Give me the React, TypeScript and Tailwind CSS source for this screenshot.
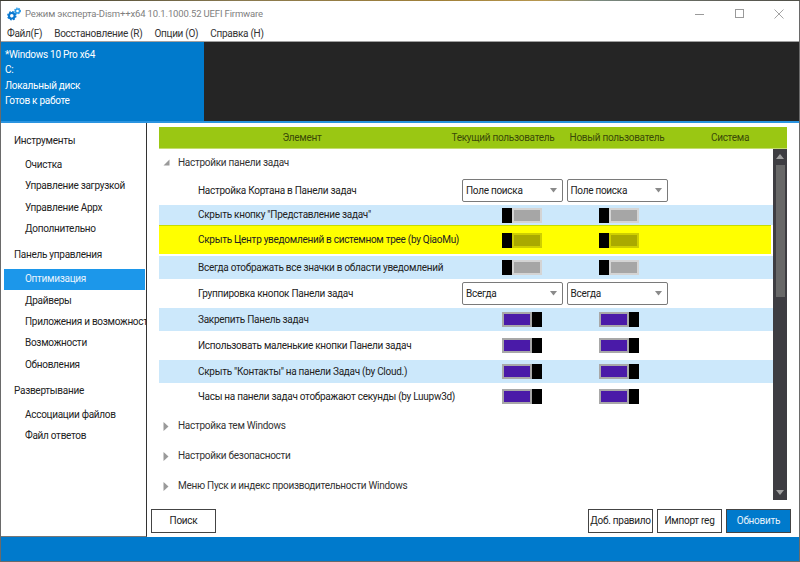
import React from "react";

const FONT = "[font-family:Roboto,sans-serif]";

function Gears() {
  return (
    <svg width="14" height="14" viewBox="0 0 16 16" className="shrink-0">
      <circle cx="5.5" cy="10" r="3.2" fill="none" stroke="#0a78d0" strokeWidth="2.4" />
      <circle cx="5.5" cy="10" r="4.6" fill="none" stroke="#0a78d0" strokeWidth="1.6" strokeDasharray="2 1.6" />
      <circle cx="12" cy="4.5" r="2.3" fill="none" stroke="#2a9be8" strokeWidth="1.6" />
      <circle cx="12" cy="4.5" r="3.4" fill="none" stroke="#2a9be8" strokeWidth="1.2" strokeDasharray="1.6 1.2" />
    </svg>
  );
}

function WindowButtons() {
  return (
    <div className="flex items-center gap-[29px] pr-[15px]">
      <svg width="10" height="10" viewBox="0 0 10 10" className="mr-[1px]">
        <path d="M0 5.5H9" stroke="#9a9a9a" strokeWidth="1" />
      </svg>
      <svg width="10" height="10" viewBox="0 0 10 10">
        <rect x="0.5" y="0.5" width="8" height="8" fill="none" stroke="#9a9a9a" />
      </svg>
      <svg width="10" height="10" viewBox="0 0 10 10">
        <path d="M0.5 0.5L9.5 9.5M9.5 0.5L0.5 9.5" stroke="#9a9a9a" strokeWidth="0.9" />
      </svg>
    </div>
  );
}

function Caret() {
  return (
    <svg width="7" height="5" viewBox="0 0 7 5" className="shrink-0">
      <path d="M0 0H7L3.5 4.5Z" fill="#8a8a8a" />
    </svg>
  );
}

function Select({ value }: { value: string }) {
  return (
    <div className="flex h-[23px] w-[101px] items-center justify-between rounded-[2px] border border-[#7a7a7a] bg-white pl-[3px] pr-[5px] text-[#222]">
      <span>{value}</span>
      <Caret />
    </div>
  );
}

function Toggle({ on, yellow }: { on?: boolean; yellow?: boolean }) {
  if (on) {
    return (
      <div className="flex h-[15px] w-[40px] items-stretch">
        <div className="flex-1 border-2 border-[#a8a8a8] bg-[#4a1aa8]" />
        <div className="w-[10px] bg-black" />
      </div>
    );
  }
  return (
    <div className="flex h-[15px] w-[40px] items-stretch">
      <div className="w-[10px] bg-black" />
      <div className={`flex-1 border-2 ${yellow ? "border-[#cfcf00] bg-[#aaaa00]" : "border-[#d4d4d4] bg-[#a6a6a6]"}`} />
    </div>
  );
}

type RowProps = {
  label: string;
  h: string;
  tone?: "blue" | "yellow" | "white";
  select?: string;
  on?: boolean;
};

function Row({ label, h, tone = "white", select, on }: RowProps) {
  const bg =
    tone === "blue"
      ? "bg-[#cce8fb] w-[614px]"
      : tone === "yellow"
      ? "bg-[#ffff00] border-t border-[#c8dc00] -ml-[2px] w-[614px] pl-[2px]"
      : "";
  return (
    <div className={`flex items-center ${h} ${bg}`}>
      <div className="w-[303px] shrink-0 whitespace-nowrap pl-[39px] text-[#222]">{label}</div>
      {select ? (
        <>
          <div className="w-[104.5px] shrink-0">
            <Select value={select} />
          </div>
          <Select value={select} />
        </>
      ) : (
        <>
          <div className="w-[137px] shrink-0 pl-[40px]">
            <Toggle on={on} yellow={tone === "yellow"} />
          </div>
          <Toggle on={on} yellow={tone === "yellow"} />
        </>
      )}
    </div>
  );
}

function Group({ label, open, h }: { label: string; open?: boolean; h: string }) {
  return (
    <div className={`flex items-center ${h} text-[#333]`}>
      <div className="flex w-[19px] justify-center pr-[5px]">
        {open ? (
          <svg width="7" height="7" viewBox="0 0 7 7">
            <path d="M6.5 0.5V6.5H0.5Z" fill="#9a9a9a" />
          </svg>
        ) : (
          <svg width="6" height="9" viewBox="0 0 6 9">
            <path d="M0.5 0L5.5 4.5L0.5 9Z" fill="#9a9a9a" />
          </svg>
        )}
      </div>
      <span>{label}</span>
    </div>
  );
}

function SideGroup({ label }: { label: string }) {
  return <div className="flex h-[27px] items-center pl-[13px] text-[#222]">{label}</div>;
}

function SideItem({ label, active }: { label: string; active?: boolean }) {
  return (
    <div
      className={`flex h-[21.3px] items-center overflow-hidden whitespace-nowrap ${
        active ? "ml-[3px] w-[141px] bg-[#1c97ea] pl-[21px] text-[#e8f4fd]" : "pl-[24px] text-[#222]"
      }`}
    >
      {label}
    </div>
  );
}

function Btn({ label, primary }: { label: string; primary?: boolean }) {
  return (
    <div
      className={`flex h-[24px] w-[65px] items-center justify-center border border-[#444] whitespace-nowrap ${
        primary ? "bg-[#007acc] text-[#e6f2fb]" : "bg-white text-[#222]"
      }`}
    >
      {label}
    </div>
  );
}

export default function App() {
  return (
    <div className={`flex h-[562px] w-[800px] flex-col overflow-hidden bg-white ${FONT} text-[10px] leading-none tracking-[-0.28px]`}>
      <div className="h-px shrink-0 bg-[linear-gradient(90deg,#3a3a30_0%,#8a7a50_30%,#a08038_55%,#b89850_68%,#7a8a80_75%,#606058_90%,#505048_100%)]" />
      <div className="flex min-h-0 flex-1 flex-col border-x border-b border-[#6a6a6a]">
        {/* Title bar */}
        <div className="flex h-[25px] shrink-0 items-center justify-between bg-white">
          <div className="flex items-center gap-[4px] pl-[6px] pt-[1px] text-[9.5px] tracking-[-0.15px] text-[#808080]">
            <Gears />
            <span>Режим эксперта-Dism++x64 10.1.1000.52 UEFI Firmware</span>
          </div>
          <WindowButtons />
        </div>
        {/* Menu */}
        <div className="flex h-[15px] shrink-0 items-center gap-[12px] bg-white pl-[6px] text-[#333]">
          <span>Файл(F)</span>
          <span>Восстановление (R)</span>
          <span>Опции (O)</span>
          <span>Справка (H)</span>
        </div>
        <div className="h-px shrink-0 bg-[#a0a0a0]" />
        {/* Header band */}
        <div className="flex h-[79px] shrink-0 bg-[#252525]">
          <div className="flex w-[203px] flex-col gap-[4.6px] bg-[#007acc] pl-[4px] pt-[6.5px] leading-[11px] text-white">
            <span>*Windows 10 Pro x64</span>
            <span>C:</span>
            <span>Локальный диск</span>
            <span>Готов к работе</span>
          </div>
        </div>
        <div className="h-[2px] shrink-0 bg-[#2a94e0]" />
        {/* Body */}
        <div className="flex min-h-0 flex-1">
          <div className="w-[146px] shrink-0 border-r border-b border-r-[#333] border-b-[#777] bg-white pt-[4.5px]">
            <SideGroup label="Инструменты" />
            <SideItem label="Очистка" />
            <SideItem label="Управление загрузкой" />
            <SideItem label="Управление Appx" />
            <SideItem label="Дополнительно" />
            <div className="h-[2px]" />
            <SideGroup label="Панель управления" />
            <SideItem label="Оптимизация" active />
            <SideItem label="Драйверы" />
            <SideItem label="Приложения и возможности" />
            <SideItem label="Возможности" />
            <SideItem label="Обновления" />
            <div className="h-[2px]" />
            <SideGroup label="Развертывание" />
            <SideItem label="Ассоциации файлов" />
            <SideItem label="Файл ответов" />
          </div>
          <div className="flex min-w-0 flex-1 flex-col bg-white pl-[12px] pt-[4px] pr-[12px]">
            {/* Table header */}
            <div className="flex h-[22px] w-[628px] shrink-0 items-center border-b border-[#c4dc70] bg-[#9ac713] text-[#3a4a08]">
              <div className="w-[286px] text-center">Элемент</div>
              <div className="w-[116px] whitespace-nowrap text-center">Текущий пользователь</div>
              <div className="w-[112px] whitespace-nowrap text-center">Новый пользователь</div>
              <div className="w-[114px] text-center">Система</div>
            </div>
            {/* Table */}
            <div className="flex h-[351px] w-[628px] shrink-0 overflow-hidden">
              <div className="w-[614px] shrink-0">
                <Group label="Настройки панели задач" open h="h-[27px]" />
                <Row label="Настройка Кортана в Панели задач" h="h-[29px]" select="Поле поиска" />
                <Row label='Скрыть кнопку "Представление задач"' h="h-[20px]" tone="blue" />
                <Row label="Скрыть Центр уведомлений в системном трее (by QiaoMu)" h="h-[29px]" tone="yellow" />
                <div className="h-[2px]" />
                <Row label="Всегда отображать все значки в области уведомлений" h="h-[23px]" tone="blue" />
                <Row label="Группировка кнопок Панели задач" h="h-[29px]" select="Всегда" />
                <Row label="Закрепить Панель задач" h="h-[23px]" tone="blue" on />
                <Row label="Использовать маленькие кнопки Панели задач" h="h-[29px]" on />
                <Row label='Скрыть "Контакты" на панели Задач (by Cloud.)' h="h-[23px]" tone="blue" on />
                <Row label="Часы на панели задач отображают секунды (by Luupw3d)" h="h-[27px]" on />
                <div className="h-px" />
                <Group label="Настройка тем Windows" h="h-[30px]" />
                <Group label="Настройки безопасности" h="h-[30px]" />
                <Group label="Меню Пуск и индекс производительности Windows" h="h-[30px]" />
              </div>
              {/* Scrollbar */}
              <div className="flex w-[14px] shrink-0 flex-col items-center justify-between bg-[#3e3d42] py-[5px]">
                <svg width="8" height="5" viewBox="0 0 8 5">
                  <path d="M4 0L8 5H0Z" fill="#a0a0a0" />
                </svg>
                <div className="mb-auto mt-[6px] h-[132px] w-[9px] bg-[#686868]" />
                <svg width="8" height="5" viewBox="0 0 8 5">
                  <path d="M0 0H8L4 5Z" fill="#a0a0a0" />
                </svg>
              </div>
            </div>
            {/* Buttons */}
            <div className="-ml-[8px] mt-[9px] flex items-center">
              <Btn label="Поиск" />
              <div className="ml-auto mr-[-4px] flex gap-[4px]">
                <Btn label="Доб. правило" />
                <Btn label="Импорт reg" />
                <Btn label="Обновить" primary />
              </div>
            </div>
          </div>
        </div>
        <div className="h-[24px] shrink-0 bg-[#007acc]" />
      </div>
    </div>
  );
}
